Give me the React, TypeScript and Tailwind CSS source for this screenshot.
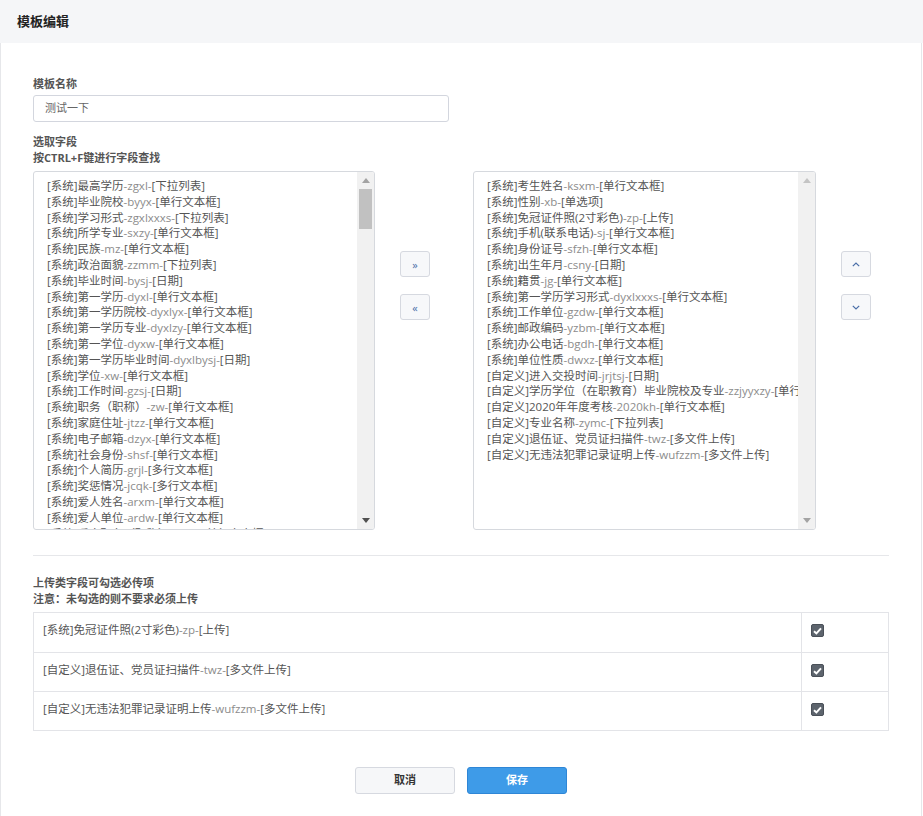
const font = { fontFamily: '"Open Sans", "Noto Sans CJK SC", sans-serif' };

type Field = [string, string, string];

const leftFields: Field[] = [
  ['[系统]最高学历', 'zgxl', '下拉列表'],
  ['[系统]毕业院校', 'byyx', '单行文本框'],
  ['[系统]学习形式', 'zgxlxxxs', '下拉列表'],
  ['[系统]所学专业', 'sxzy', '单行文本框'],
  ['[系统]民族', 'mz', '单行文本框'],
  ['[系统]政治面貌', 'zzmm', '下拉列表'],
  ['[系统]毕业时间', 'bysj', '日期'],
  ['[系统]第一学历', 'dyxl', '单行文本框'],
  ['[系统]第一学历院校', 'dyxlyx', '单行文本框'],
  ['[系统]第一学历专业', 'dyxlzy', '单行文本框'],
  ['[系统]第一学位', 'dyxw', '单行文本框'],
  ['[系统]第一学历毕业时间', 'dyxlbysj', '日期'],
  ['[系统]学位', 'xw', '单行文本框'],
  ['[系统]工作时间', 'gzsj', '日期'],
  ['[系统]职务（职称）', 'zw', '单行文本框'],
  ['[系统]家庭住址', 'jtzz', '单行文本框'],
  ['[系统]电子邮箱', 'dzyx', '单行文本框'],
  ['[系统]社会身份', 'shsf', '单行文本框'],
  ['[系统]个人简历', 'grjl', '多行文本框'],
  ['[系统]奖惩情况', 'jcqk', '多行文本框'],
  ['[系统]爱人姓名', 'arxm', '单行文本框'],
  ['[系统]爱人单位', 'ardw', '单行文本框'],
  ['[系统]爱人职务（职称）', 'arzw', '单行文本框'],
];

const rightFields: Field[] = [
  ['[系统]考生姓名', 'ksxm', '单行文本框'],
  ['[系统]性别', 'xb', '单选项'],
  ['[系统]免冠证件照(2寸彩色)', 'zp', '上传'],
  ['[系统]手机(联系电话)', 'sj', '单行文本框'],
  ['[系统]身份证号', 'sfzh', '单行文本框'],
  ['[系统]出生年月', 'csny', '日期'],
  ['[系统]籍贯', 'jg', '单行文本框'],
  ['[系统]第一学历学习形式', 'dyxlxxxs', '单行文本框'],
  ['[系统]工作单位', 'gzdw', '单行文本框'],
  ['[系统]邮政编码', 'yzbm', '单行文本框'],
  ['[系统]办公电话', 'bgdh', '单行文本框'],
  ['[系统]单位性质', 'dwxz', '单行文本框'],
  ['[自定义]进入交投时间', 'jrjtsj', '日期'],
  ['[自定义]学历学位（在职教育）毕业院校及专业', 'zzjyyxzy', '单行文本框'],
  ['[自定义]2020年年度考核', '2020kh', '单行文本框'],
  ['[自定义]专业名称', 'zymc', '下拉列表'],
  ['[自定义]退伍证、党员证扫描件', 'twz', '多文件上传'],
  ['[自定义]无违法犯罪记录证明上传', 'wufzzm', '多文件上传'],
];

const uploadFields: Field[] = [
  ['[系统]免冠证件照(2寸彩色)', 'zp', '上传'],
  ['[自定义]退伍证、党员证扫描件', 'twz', '多文件上传'],
  ['[自定义]无违法犯罪记录证明上传', 'wufzzm', '多文件上传'],
];

function FieldText({ field }: { field: Field }) {
  const [name, code, type] = field;
  return (
    <>
      {name}
      <span className="text-[#8c8c8c]">-{code}-</span>[{type}]
    </>
  );
}

function Scrollbar({ thumb }: { thumb: boolean }) {
  return (
    <div className="w-[17px] shrink-0 bg-[#f1f1f1] flex flex-col">
      <div className="h-[17px] flex items-center justify-center">
        <svg width="8" height="5" viewBox="0 0 8 5">
          <path d="M4 0 L8 5 L0 5 Z" fill={thumb ? '#a3a3a3' : '#c4c4c4'} />
        </svg>
      </div>
      <div className="flex-1 px-[2px]">
        {thumb && <div className="h-[40px] bg-[#c1c1c1]" />}
      </div>
      <div className="h-[17px] flex items-center justify-center">
        <svg width="8" height="5" viewBox="0 0 8 5">
          <path d="M0 0 L8 0 L4 5 Z" fill={thumb ? '#505050' : '#a3a3a3'} />
        </svg>
      </div>
    </div>
  );
}

function FieldList({ fields, thumb, width }: { fields: Field[]; thumb: boolean; width: string }) {
  return (
    <div className={`${width} h-[359px] border border-[#d6d9de] rounded-[3px] flex overflow-hidden bg-white`}>
      <div className="flex-1 overflow-hidden pl-[13px] pt-[6px] text-[11.5px] leading-[15.8px] text-[#555] whitespace-nowrap">
        {fields.map((f, i) => (
          <div key={i}>
            <FieldText field={f} />
          </div>
        ))}
      </div>
      <Scrollbar thumb={thumb} />
    </div>
  );
}

function SmallButton({ children }: { children: React.ReactNode }) {
  return (
    <button className="w-[30px] h-[26px] rounded-[3px] border border-[#d6d9e0] bg-[#f7f8fa] flex items-center justify-center">
      {children}
    </button>
  );
}

function Checked() {
  return (
    <div className="w-[13px] h-[13px] rounded-[2px] bg-[#5d646d] border border-[#4a5058] flex items-center justify-center">
      <svg width="9" height="8" viewBox="0 0 9 8">
        <path d="M1 4.2 L3.4 6.4 L8 1.4" stroke="white" strokeWidth="2" fill="none" />
      </svg>
    </div>
  );
}

export default function App() {
  return (
    <div className="w-[923px] h-[816px] bg-white flex flex-col" style={font}>
      {/* Header */}
      <div className="h-[43px] bg-[#f5f6f8] flex items-center pl-[17px] shrink-0">
        <h1 className="text-[13px] font-bold text-[#222]">模板编辑</h1>
      </div>

      <div className="flex-1 border-l border-r border-[#e6e7ea] mr-[1px] px-[32px] pt-[33px]">
        <div className="text-[11px] font-bold text-[#555] leading-[16px]">模板名称</div>
        <div className="mt-[3px] w-[416px] h-[27px] border border-[#d3d6de] rounded-[3px] flex items-center pl-[11px] text-[11px] text-[#666]">
          测试一下
        </div>

        <div className="mt-[12px] text-[11px] font-bold text-[#555] leading-[16px]">
          <div>选取字段</div>
          <div>按CTRL+F键进行字段查找</div>
        </div>

        {/* Field lists */}
        <div className="mt-[5px] flex">
          <FieldList fields={leftFields} thumb width="w-[342px]" />
          <div className="w-[98px] pl-[25px] pt-[80px] flex flex-col gap-[17px]">
            <SmallButton>
              <span className="text-[11px] text-[#4a6ea8] leading-none">»</span>
            </SmallButton>
            <SmallButton>
              <span className="text-[11px] text-[#4a6ea8] leading-none">«</span>
            </SmallButton>
          </div>
          <FieldList fields={rightFields} thumb={false} width="w-[343px]" />
          <div className="pl-[25px] pt-[80px] flex flex-col gap-[17px]">
            <SmallButton>
              <svg width="8" height="5" viewBox="0 0 8 5">
                <path d="M0.8 4.2 L4 1 L7.2 4.2" stroke="#4a6ea8" strokeWidth="1.2" fill="none" />
              </svg>
            </SmallButton>
            <SmallButton>
              <svg width="8" height="5" viewBox="0 0 8 5">
                <path d="M0.8 0.8 L4 4 L7.2 0.8" stroke="#4a6ea8" strokeWidth="1.2" fill="none" />
              </svg>
            </SmallButton>
          </div>
        </div>

        <div className="mt-[25px] h-px bg-[#e6e7ea]" />

        <div className="mt-[19px] text-[11px] font-bold text-[#555] leading-[16px]">
          <div>上传类字段可勾选必传项</div>
          <div>注意：未勾选的则不要求必须上传</div>
        </div>

        {/* Required upload table */}
        <div className="mt-[5px] border border-[#e3e4e8]">
          {uploadFields.map((f, i) => (
            <div key={i} className={`flex h-[39px] ${i > 0 ? 'border-t border-[#e3e4e8]' : ''}`}>
              <div className="flex-1 pl-[9px] pt-[9px] text-[11.5px] leading-[16px] text-[#555] border-r border-[#e3e4e8]">
                <FieldText field={f} />
              </div>
              <div className="w-[86px] pl-[9px] pt-[11px]">
                <Checked />
              </div>
            </div>
          ))}
        </div>

        {/* Actions */}
        <div className="mt-[36px] flex justify-center gap-[12px]">
          <button className="w-[100px] h-[27px] rounded-[3px] border border-[#d6d9e0] bg-[#f6f7f9] text-[11px] font-bold text-[#333]">
            取消
          </button>
          <button className="w-[100px] h-[27px] rounded-[3px] border border-[#2e86d6] bg-[#3e9be8] text-[11px] font-bold text-white">
            保存
          </button>
        </div>
      </div>
    </div>
  );
}
